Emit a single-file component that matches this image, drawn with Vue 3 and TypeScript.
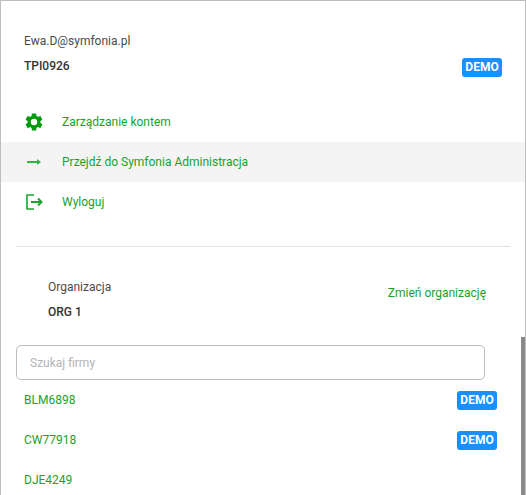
<script setup lang="ts">
interface Company { name: string; demo: boolean }
const companies: Company[] = [
  { name: 'BLM6898', demo: true },
  { name: 'CW77918', demo: true },
  { name: 'DJE4249', demo: false },
]
</script>

<template>
  <div class="panel">
    <header class="user">
      <div class="email">Ewa.D@symfonia.pl</div>
      <div class="user-row">
        <strong class="code">TPI0926</strong>
        <span class="badge">DEMO</span>
      </div>
    </header>

    <nav class="menu">
      <a class="item">
        <svg class="icon" viewBox="-1.5 -1.5 27 27" width="24" height="24"><path fill="#009a0e" d="M19.14 12.94c.04-.3.06-.61.06-.94s-.02-.64-.07-.94l2.03-1.58a.49.49 0 0 0 .12-.61l-1.92-3.32a.49.49 0 0 0-.59-.22l-2.39.96a7 7 0 0 0-1.62-.94l-.36-2.54a.48.48 0 0 0-.48-.41h-3.84a.47.47 0 0 0-.47.41l-.36 2.54c-.59.24-1.13.57-1.62.94l-2.39-.96a.49.49 0 0 0-.59.22L2.74 8.87a.47.47 0 0 0 .12.61l2.03 1.58c-.05.3-.09.63-.09.94s.02.64.07.94l-2.03 1.58a.49.49 0 0 0-.12.61l1.92 3.32c.12.22.37.29.59.22l2.39-.96c.5.38 1.03.7 1.62.94l.36 2.54c.05.24.24.41.48.41h3.84c.24 0 .44-.17.47-.41l.36-2.54a7 7 0 0 0 1.62-.94l2.39.96c.22.08.47 0 .59-.22l1.92-3.32a.46.46 0 0 0-.12-.61l-2.01-1.58zM12 15.6A3.6 3.6 0 1 1 12 8.4a3.6 3.6 0 0 1 0 7.2z"/></svg>
        <span>Zarządzanie kontem</span>
      </a>
      <a class="item active">
        <svg class="icon" viewBox="0 0 24 24" width="24" height="24"><path fill="#2fb344" d="M5 11h10V9l4 3-4 3v-2H5z"/></svg>
        <span>Przejdź do Symfonia Administracja</span>
      </a>
      <a class="item">
        <svg class="icon" viewBox="0 0 24 24" width="24" height="24"><path fill="none" stroke="#1aa52b" stroke-width="1.600" d="M12 5H5v14h7"/><path fill="none" stroke="#1aa52b" stroke-width="2" d="M9 12h10.500M16 8.500 19.500 12 16 15.500"/></svg>
        <span>Wyloguj</span>
      </a>
    </nav>

    <hr class="divider" />

    <section class="org">
      <div class="org-text">
        <div class="org-label">Organizacja</div>
        <strong class="org-name">ORG 1</strong>
      </div>
      <a class="change">Zmień organizację</a>
    </section>

    <input class="search" type="text" placeholder="Szukaj firmy" />

    <ul class="list">
      <li v-for="c in companies" :key="c.name" class="company">
        <a>{{ c.name }}</a>
        <span v-if="c.demo" class="badge">DEMO</span>
      </li>
    </ul>

    <div class="thumb"></div>
  </div>
</template>

<style>
html, body { margin: 0; background: #fff; overflow: hidden; }
</style>

<style scoped>
.panel {
  position: relative;
  box-sizing: border-box;
  width: 526px;
  height: 495px;
  overflow: hidden;
  background: #fff;
  border: 1px solid #bdbdbd;
  border-bottom: 0;
  font-family: Roboto, "Liberation Sans", sans-serif;
  font-size: 12px;
  color: #4a4a4a;
}
.user { padding: 33px 23px 0; }
.email { height: 14px; line-height: 14px; }
.user-row {
  display: flex;
  justify-content: space-between;
  margin-top: 10px;
}
.code { margin-top: 1px; line-height: 14px; font-weight: 500; color: #333; }
.badge {
  box-sizing: border-box;
  display: block;
  width: 40px;
  height: 19px;
  line-height: 19px;
  text-align: center;
  border-radius: 3px;
  background: #1890ff;
  color: #fff;
  font-weight: 700;
}
.menu { margin-top: 25px; }
.item {
  display: flex;
  align-items: center;
  height: 40px;
  padding-left: 21px;
  gap: 16px;
  color: #17a329;
}
.item.active { background: #f4f4f4; }
.icon { flex: none; }
.divider {
  margin: 24px 15px 0;
  border: 0;
  border-top: 1px solid #e2e2e2;
}
.org {
  display: flex;
  justify-content: space-between;
  padding: 33px 39px 0 47px;
}
.org-label { line-height: 14px; }
.org-name { display: block; margin-top: 11px; line-height: 14px; font-weight: 500; color: #333; }
.change { margin-top: 6px; line-height: 14px; color: #17a329; }
.search {
  display: block;
  box-sizing: border-box;
  width: 469px;
  height: 35px;
  margin: 26px 0 0 15px;
  padding: 0 13px;
  border: 1px solid #bdbdbd;
  border-radius: 5px;
  outline: none;
  font: inherit;
  background: #fff;
}
.search::placeholder { color: #b4b4b4; opacity: 1; }
.list { list-style: none; margin: 0; padding: 0; }
.company {
  display: flex;
  align-items: center;
  justify-content: space-between;
  height: 40px;
  padding: 0 28px 0 23px;
  color: #17a329;
}
.thumb {
  position: absolute;
  top: 336px;
  right: 0;
  width: 4px;
  height: 160px;
  background: #8a8a8a;
}
</style>
